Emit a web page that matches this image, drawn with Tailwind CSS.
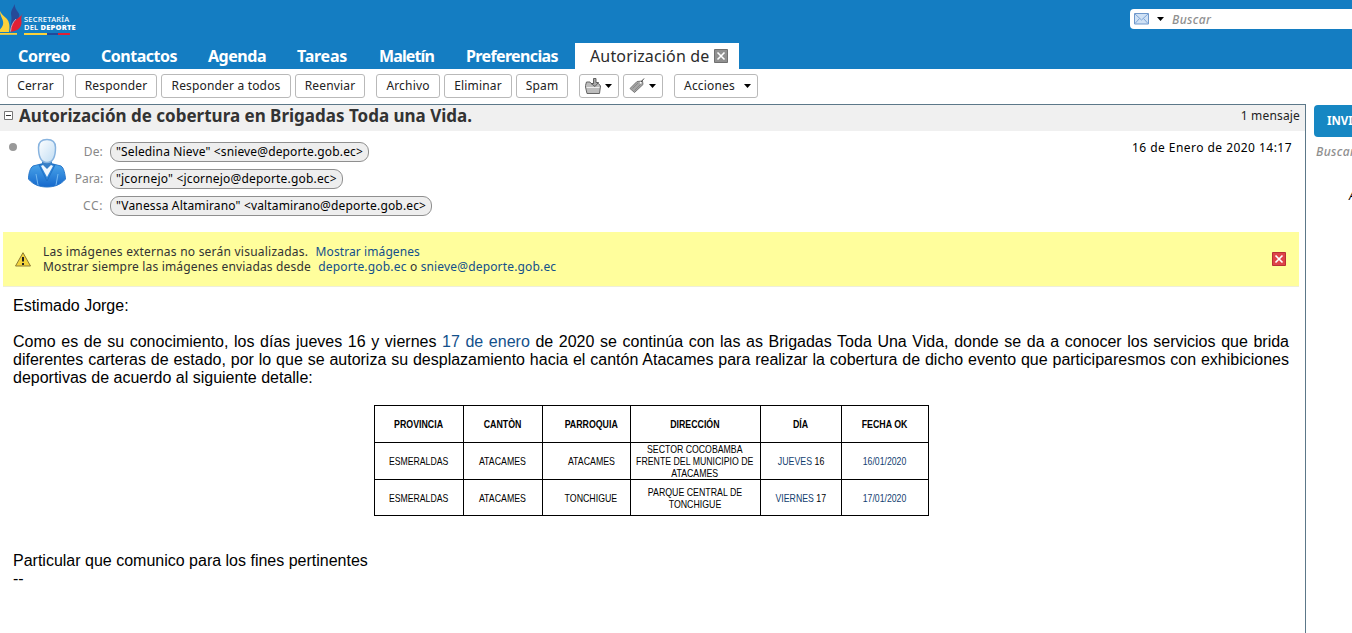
<!DOCTYPE html>
<html lang="es">
<head>
<meta charset="utf-8">
<title>Autorización de cobertura</title>
<script src="https://cdn.jsdelivr.net/npm/@tailwindcss/browser@4"></script>
</head>
<body class="w-[1352px] h-[633px] overflow-hidden bg-white font-['Noto_Sans',sans-serif] text-[12px] tracking-[0.17px] text-[#222] flex flex-col whitespace-nowrap">
<header class="h-[69px] shrink-0 bg-[#147dc2] flex flex-col">
  <div class="h-[43px] flex justify-between">
    <div class="flex">
      <svg class="w-[24px] h-[43px]" viewBox="0 0 24 43">
        <path d="M14.500 4c-1 4-3 5-3.500 9c0 2 .5 3 .5 6c0 3-1 6-1.500 11c2-6 6-9 9-13c2-4-4-6-4.500-13z" fill="#264a98"/>
        <path d="M0 11c1 3 4 5 6.500 7.500c3 3 3.500 8 2.500 13.500H0v-2.500c3-3 4-6 2.500-10C1.500 17 0 15 0 11z" fill="#fcd13a"/>
        <path d="M23 13c-2 3-2 6-1.500 8c.5 7-4 10-11 10.800c.5-6 2-9 5.500-12c2-2 5-3 7-6.800z" fill="#e01f35"/>
        <path d="M16 19c-3 3-5 7-5.500 12.500" stroke="#f4e7ec" stroke-width=".6" fill="none"/>
        <path d="M0 33h17v1.800H0z" fill="#fcd13a"/>
      </svg>
      <div class="pt-[15px] text-white leading-[8px]">
        <div class="h-[8px] text-[7.5px] tracking-[0.25px] font-medium">SECRETARÍA</div>
        <div class="h-[10px] text-[7.5px] tracking-[0.2px] font-semibold">DEL <b>DEPORTE</b></div>
        <div class="flex h-[2px]"><i class="w-[23px] bg-[#fcd13a]"></i><i class="w-[11px] bg-[#23499b]"></i><i class="w-[12px] bg-[#e01f35]"></i></div>
      </div>
    </div>
    <div class="mt-[9px] h-5 w-[222px] bg-white rounded-l-[4px] flex items-center pl-1">
      <svg class="w-[15px] h-[12px]" viewBox="0 0 15 12"><path d="M.5.500h14v10.500H.500z" fill="#cfe1f5" stroke="#6e97cb"/><path d="M1 1l6.500 6L14 1M1 10.500l4.500-5M14 10.500l-4.500-5" fill="none" stroke="#7fa6d6"/></svg>
      <svg class="w-[7px] h-1 ml-2" viewBox="0 0 7 4"><path d="M0 0h7L3.500 4z" fill="#000"/></svg>
      <span class="ml-[8px] mt-px italic font-medium text-[#8f8f8f] tracking-[0.4px]">Buscar</span>
    </div>
  </div>
  <nav class="h-[26px] flex text-[16px] leading-[26px] font-bold text-white pl-[18px]">
    <span class="w-[83px] tracking-[-0.3px]">Correo</span>
    <span class="w-[107px] tracking-[-0.49px]">Contactos</span>
    <span class="w-[89px] tracking-[-0.47px]">Agenda</span>
    <span class="w-[82px] tracking-[-0.26px]">Tareas</span>
    <span class="w-[87px] tracking-[-0.88px]">Maletín</span>
    <span class="w-[109px] tracking-[-0.63px]">Preferencias</span>
    <span class="w-[164px] bg-white text-[#2b2b2b] font-normal pl-[15px] tracking-[0.15px] flex items-center">Autorización de
      <svg class="w-[14px] h-[14px] ml-[5px]" viewBox="0 0 14 14"><path d="M.5.500h13v13H.500z" fill="#909090" stroke="#707070"/><path d="M3.500 3.500l7 7M10.500 3.500l-7 7" stroke="#fff" stroke-width="1.600"/></svg></span>
  </nav>
</header>

<div class="h-[35px] shrink-0 pt-[5px] pl-[7px] flex leading-[22px] *:h-6 *:border *:border-[#b9b9b9] *:rounded-[3px] *:flex *:items-center *:justify-center">
  <div class="w-[57px]">Cerrar</div>
  <div class="w-[82px] ml-[11px]">Responder</div>
  <div class="w-[130px] ml-1">Responder a todos</div>
  <div class="w-[70px] ml-1">Reenviar</div>
  <div class="w-[64px] ml-[11px]">Archivo</div>
  <div class="w-[68px] ml-1">Eliminar</div>
  <div class="w-[52px] ml-1">Spam</div>
  <div class="w-[40px] ml-[11px] gap-[4px] pr-[2px]">
    <svg class="w-4 h-4" viewBox="0 0 16 16"><path d="M.5 7.500l1-3.500h3.500l1 1.500h7.500l2 2.500-1 7.500H2L.5 9z" fill="#bdbdbd" stroke="#666"/><path d="M1.500 9.500h13" stroke="#eee"/><path d="M8.500.500h2.500v4h2.500l-3.500 4-4-3h2.500z" fill="#aaa" stroke="#555" stroke-width=".9"/></svg>
    <svg class="w-[7px] h-1" viewBox="0 0 7 4"><path d="M0 0h7L3.500 4z"/></svg>
  </div>
  <div class="w-[40px] ml-1 gap-[4px] pr-[2px]">
    <svg class="w-4 h-4" viewBox="0 0 16 16"><path d="M1 10.500l7-7 5.500-.5.500 3.500-8.500 8z" fill="#a5a5a5" stroke="#777"/><path d="M3.500 10.500l5.500-5.500M5.500 12.500l6-6" stroke="#888"/><path d="M12 4l3-3.500" stroke="#444"/><circle cx="11.700" cy="4.700" r="1" fill="#fff"/></svg>
    <svg class="w-[7px] h-1" viewBox="0 0 7 4"><path d="M0 0h7L3.500 4z"/></svg>
  </div>
  <div class="w-[84px] ml-[11px] gap-[9px] pl-[3px]">Acciones <svg class="w-[7px] h-1" viewBox="0 0 7 4"><path d="M0 0h7L3.500 4z"/></svg></div>
</div>

<div class="flex grow">
  <main class="w-[1306px] shrink-0 border-t border-r border-[#5c7889]">
    <div class="h-[26px] bg-[#f0f0f0] flex justify-between pl-1 pr-[5px]">
      <div class="flex">
        <svg class="w-[9px] h-[9px] mt-[6px]" viewBox="0 0 9 9"><path d="M.5.500h8v8h-8z" fill="#fff" stroke="#777"/><path d="M2 4.500h5" stroke="#333"/></svg>
        <h1 class="ml-[6px] text-[17px] leading-[21px] font-bold text-[#333] tracking-[0px]">Autorización de cobertura en Brigadas Toda una Vida.</h1>
      </div>
      <span class="leading-[22px] tracking-[0.17px]">1 mensaje</span>
    </div>

    <div class="h-[101px] flex text-black">
      <i class="w-2 h-2 rounded-full bg-[#999] ml-[9px] mt-[12px]"></i>
      <svg class="w-[40px] h-[50px] ml-[10px] mt-[7px]" viewBox="0 0 40 50">
        <defs><linearGradient id="b" x1="0" y1="0" x2="0" y2="1"><stop offset="0" stop-color="#4aa5ea"/><stop offset="1" stop-color="#1568cc"/></linearGradient>
        <linearGradient id="h" x1="0" y1="0" x2="1" y2="1"><stop offset="0" stop-color="#fff"/><stop offset="1" stop-color="#bfdcf3"/></linearGradient></defs>
        <path d="M14 26h12l8 2c3 2 4 8 4.500 13c-5 6-11.500 8-18.500 8S6.500 47 1.500 41c0-5 1.500-11 4.500-13z" fill="url(#b)" stroke="#2b79cb"/>
        <path d="M12 27l8 16 8-16-3-1H15z" fill="#2f86d9" stroke="#1a69bf" stroke-width=".8"/>
        <path d="M14 28l6 11 6-11-2-1h-8z" fill="#f1f8fe"/>
        <path d="M15 22h10v4l-5 5-5-5z" fill="#387fc6"/>
        <path d="M9 36l2 11M31 36l-2 11" stroke="#74b8f0" fill="none"/>
        <path d="M20 1.500c6 0 8.500 3 8.500 8c0 8-2 15-8.500 15s-8.500-7-8.500-15c0-5 2.500-8 8.500-8z" fill="url(#h)" stroke="#87b3df" stroke-width="1.500"/>
      </svg>
      <div class="grow pt-[11px] flex flex-col gap-[7px] leading-[18px] *:flex *:h-5 *:items-center">
        <div><span class="w-[36px] text-right text-[#888]">De:</span><span class="ml-[7px] h-5 w-[259px] border border-[#8f8f8f] rounded-[9px] bg-[#eee] pl-[5px] tracking-[0.14px]">"Seledina Nieve" &lt;snieve@deporte.gob.ec&gt;</span></div>
        <div><span class="w-[36px] text-right text-[#888] tracking-[-0.1px]">Para:</span><span class="ml-[7px] h-5 w-[233px] border border-[#8f8f8f] rounded-[9px] bg-[#eee] pl-[5px] tracking-[0.18px]">"jcornejo" &lt;jcornejo@deporte.gob.ec&gt;</span></div>
        <div><span class="w-[36px] text-right text-[#888] tracking-[0.6px]">CC:</span><span class="ml-[7px] h-5 w-[322px] border border-[#8f8f8f] rounded-[9px] bg-[#eee] pl-[5px] tracking-[0.16px]">"Vanessa Altamirano" &lt;valtamirano@deporte.gob.ec&gt;</span></div>
      </div>
      <span class="pt-[8px] pr-[13px] tracking-[0.46px] leading-[18px]">16 de Enero de 2020 14:17</span>
    </div>

    <div class="h-[55px] ml-[3px] w-[1296px] bg-[#fffe9c] border-b border-[#eeeeda] flex items-center pl-[12px] pr-[13px]">
      <svg class="w-4 h-[15px]" viewBox="0 0 16 15"><path d="M8 .700L15.500 14H.500z" fill="#f3d43b" stroke="#8d7b35" stroke-linejoin="round"/><path d="M8 5v4.500M8 11v2" stroke="#222" stroke-width="2"/></svg>
      <div class="ml-[12px] grow leading-[15px] text-[#333]">
        <div class="tracking-[0.23px]">Las imágenes externas no serán visualizadas. <a class="ml-[4px] text-[#13508b] tracking-[0.09px]">Mostrar imágenes</a></div>
        <div class="tracking-[0.17px]">Mostrar siempre las imágenes enviadas desde <a class="ml-[4px] text-[#13508b] tracking-[0.18px]">deporte.gob.ec</a> o <a class="text-[#13508b] tracking-[0.16px]">snieve@deporte.gob.ec</a></div>
      </div>
      <svg class="w-[14px] h-[14px]" viewBox="0 0 14 14"><path d="M.5.500h13v13H.500z" fill="#de4348" stroke="#b92f35"/><path d="M3.500 3.500l7 7M10.500 3.500l-7 7" stroke="#fff" stroke-width="1.700"/></svg>
    </div>

    <article class="pl-[13px] pr-4 pt-[10px] font-['Liberation_Sans',Arial,sans-serif] text-[16px] leading-[18px] tracking-[0px] text-black">
      <p>Estimado Jorge:</p>
      <div class="mt-[18px]">
        <p class="[text-align-last:justify]">Como es de su conocimiento, los días jueves 16 y viernes <a class="text-[#13508b]">17 de enero</a> de 2020 se continúa con las as Brigadas Toda Una Vida, donde se da a conocer los servicios que brida</p>
        <p class="[text-align-last:justify]">diferentes carteras de estado, por lo que se autoriza su desplazamiento hacia el cantón Atacames para realizar la cobertura de dicho evento que participaresmos con exhibiciones</p>
        <p>deportivas de acuerdo al siguiente detalle:</p>
      </div>
      <div class="mt-[18px] ml-[361px] w-[555px] grid grid-cols-[89px_79px_88px_130px_81px_87px] grid-rows-[37px_37px_36px] border-l border-t border-black text-[11px] leading-[12px] text-center *:border-r *:border-b *:border-black *:flex *:items-center *:justify-center">
        <div class="font-bold"><span class="scale-x-[.8]">PROVINCIA</span></div>
        <div class="font-bold"><span class="scale-x-[.8]">CANTÒN</span></div>
        <div class="font-bold pl-[10px]"><span class="scale-x-[.8]">PARROQUIA</span></div>
        <div class="font-bold pr-px"><span class="scale-x-[.8]">DIRECCIÓN</span></div>
        <div class="font-bold pr-px"><span class="scale-x-[.8]">DÍA</span></div>
        <div class="font-bold"><span class="scale-x-[.8]">FECHA OK</span></div>
        <div><span class="scale-x-[.79]">ESMERALDAS</span></div>
        <div class="pr-px"><span class="scale-x-[.8]">ATACAMES</span></div>
        <div class="pl-[9px]"><span class="scale-x-[.8]">ATACAMES</span></div>
        <div class="pr-[2px]"><span class="scale-x-[.795]">SECTOR COCOBAMBA<br>FRENTE DEL MUNICIPIO DE<br>ATACAMES</span></div>
        <div><span class="scale-x-[.8]"><a class="text-[#13406f]">JUEVES</a> 16</span></div>
        <div class="text-[#13406f]"><span class="scale-x-[.79]">16/01/2020</span></div>
        <div><span class="scale-x-[.79]">ESMERALDAS</span></div>
        <div class="pr-px"><span class="scale-x-[.8]">ATACAMES</span></div>
        <div class="pl-[9px]"><span class="scale-x-[.8]">TONCHIGUE</span></div>
        <div class="pr-[2px]"><span class="scale-x-[.8]">PARQUE CENTRAL DE<br>TONCHIGUE</span></div>
        <div><span class="scale-x-[.795]"><a class="text-[#13406f]">VIERNES</a> 17</span></div>
        <div class="text-[#13406f]"><span class="scale-x-[.79]">17/01/2020</span></div>
      </div>
      <p class="mt-9">Particular que comunico para los fines pertinentes</p>
      <p>--</p>
    </article>
  </main>
  <aside class="w-[38px] ml-2 mt-px shrink-0 overflow-hidden">
    <div class="h-8 w-[120px] bg-[#1687c3] rounded-[4px] text-white font-bold leading-8 pl-[13px] text-[11.5px] tracking-[0px]">INVITAR</div>
    <div class="mt-[6px] ml-[2px] leading-[18px] italic font-medium text-[#8f8f8f] tracking-[0.4px]">Buscar</div>
    <div class="mt-[26px] ml-[35px] leading-[18px] italic text-black">A</div>
  </aside>
</div>
</body>
</html>
